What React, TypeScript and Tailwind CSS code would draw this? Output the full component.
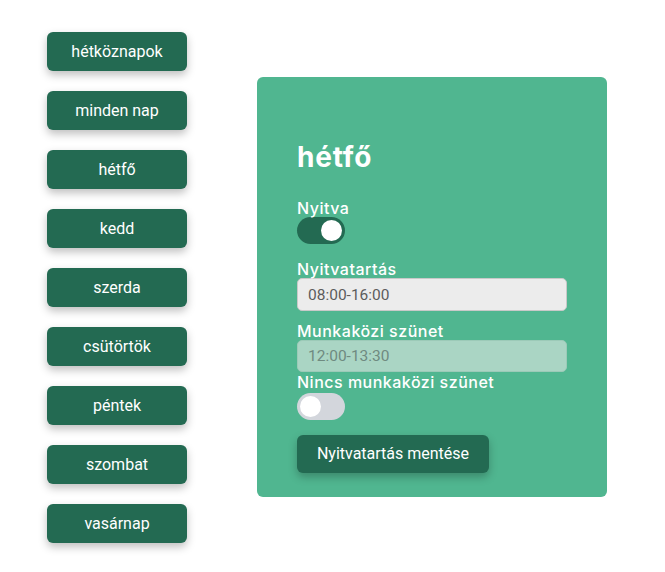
import React, { useState } from 'react';

const days = ['hétköznapok', 'minden nap', 'hétfő', 'kedd', 'szerda', 'csütörtök', 'péntek', 'szombat', 'vasárnap'];

const Toggle: React.FC<{ on: boolean; onChange: () => void; className?: string }> = ({ on, onChange, className = '' }) => (
  <button
    onClick={onChange}
    className={`flex items-center w-[48px] h-[27px] rounded-full px-[3px] transition-colors ${on ? 'bg-[#236a52] justify-end' : 'bg-[#d3d6dc] justify-start'} ${className}`}
  >
    <span className="block w-[21px] h-[21px] rounded-full bg-white" />
  </button>
);

export default function App() {
  const [open, setOpen] = useState(true);
  const [noBreak, setNoBreak] = useState(false);

  return (
    <div className="flex gap-[70px] pl-[47px] pt-[32px] bg-white min-h-[572px]" style={{ fontFamily: 'Roboto, sans-serif' }}>
      {/* Day buttons */}
      <div className="flex flex-col gap-[20px]">
        {days.map(d => (
          <button
            key={d}
            className="w-[140px] h-[39px] rounded-[6px] bg-[#236a52] text-white text-[16px] shadow-[0_4px_8px_rgba(0,0,0,0.25)]"
          >
            {d}
          </button>
        ))}
      </div>

      {/* Panel */}
      <div className="mt-[45px] w-[350px] h-[420px] rounded-[6px] bg-[#50b690] px-[40px] pt-[62px] text-white" style={{ fontFamily: 'Inter, sans-serif' }}>
        <h2 className="text-[28px] font-bold leading-[36px] tracking-[0.8px]">hétfő</h2>
        <div className="mt-[24px] text-[16px] font-medium leading-[18px] tracking-[0.5px]">Nyitva</div>
        <Toggle on={open} onChange={() => setOpen(!open)} />
        <div className="mt-[16px] text-[16px] font-medium leading-[18px] tracking-[0.5px]">Nyitvatartás</div>
        <input
          defaultValue="08:00-16:00"
          className="block w-[270px] h-[33px] rounded-[5px] bg-[#ececec] border border-[#c9c9c9] px-[10px] text-[15.5px] text-[#5c5c5c] outline-none"
          style={{ fontFamily: 'Roboto, sans-serif' }}
        />
        <div className="mt-[11px] text-[16px] font-medium leading-[18px] tracking-[0.5px]">Munkaközi szünet</div>
        <input
          defaultValue="12:00-13:30"
          disabled
          className="block w-[270px] h-[32px] rounded-[5px] bg-[#aad5c4] border border-[#9ccab8] px-[10px] text-[15.5px] text-[#6f8a80] outline-none"
          style={{ fontFamily: 'Roboto, sans-serif' }}
        />
        <div className="mt-[1px] text-[16px] font-medium leading-[18px] tracking-[0.5px]">Nincs munkaközi szünet</div>
        <Toggle on={noBreak} onChange={() => setNoBreak(!noBreak)} className="mt-[2px] h-[26px]" />
        <button
          className="block mt-[15px] w-[192px] h-[38px] rounded-[6px] bg-[#236a52] text-white text-[16px] shadow-[0_4px_8px_rgba(0,0,0,0.25)]"
          style={{ fontFamily: 'Roboto, sans-serif' }}
        >
          Nyitvatartás mentése
        </button>
      </div>
    </div>
  );
}
